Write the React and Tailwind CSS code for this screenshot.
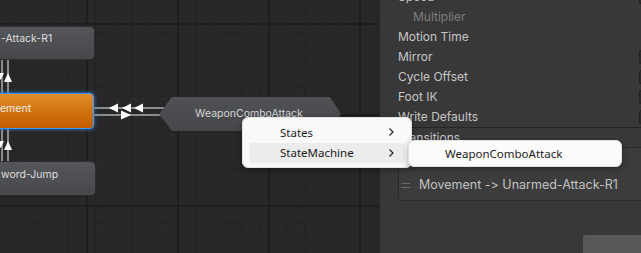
import React from "react";

const rows = [
  { label: "Speed", dim: false, box: true },
  { label: "Multiplier", dim: true, box: false },
  { label: "Motion Time", dim: false, box: false },
  { label: "Mirror", dim: false, box: true },
  { label: "Cycle Offset", dim: false, box: true },
  { label: "Foot IK", dim: false, box: true },
  { label: "Write Defaults", dim: false, box: true },
];

const Chevron = () => (
  <svg width="7" height="10" viewBox="0 0 7 10" className="shrink-0">
    <path d="M1.5 1.5 L5 5 L1.5 8.5" fill="none" stroke="#222" strokeWidth="1.2" />
  </svg>
);

const Graph = () => {
  return (
    <div className="relative w-[380px] h-full shrink-0 overflow-hidden bg-[#282828] bg-[linear-gradient(to_right,#1e1e1e_2px,transparent_2px),linear-gradient(to_bottom,#1e1e1e_2px,transparent_2px),linear-gradient(to_right,#232323_1px,transparent_1px),linear-gradient(to_bottom,#232323_1px,transparent_1px)] bg-[size:91px_91px,91px_91px,9.1px_9.1px,9.1px_9.1px] bg-[position:86px_23px,86px_23px,86px_23px,86px_23px]">
      {/* transitions */}
      <svg className="absolute left-0 top-0" width="380" height="253">
        <g stroke="#8c8c8c" strokeWidth="2">
          <line x1="2" y1="60" x2="2" y2="94" />
          <line x1="8" y1="60" x2="8" y2="94" />
          <line x1="2" y1="128" x2="2" y2="162" />
          <line x1="8" y1="128" x2="8" y2="162" />
          <line x1="94" y1="108" x2="166" y2="108" />
          <line x1="94" y1="115" x2="166" y2="115" />
        </g>
        <g fill="#ffffff">
          <polygon points="-3,73 4,73 0.5,80" />
          <polygon points="4,82 12,82 8,73" />
          <polygon points="-3,141 4,141 0.5,148" />
          <polygon points="4,150 12,150 8,141" />
          <polygon points="109,108 118,103.5 118,112.5" />
          <polygon points="122,108 131,103.5 131,112.5" />
          <polygon points="134,108 143,103.5 143,112.5" />
          <polygon points="131,115 121,110.5 121,119.5" />
        </g>
      </svg>

      {/* nodes */}
      <div className="absolute left-[-96px] top-[26px] w-[191px] h-[34px] rounded-[5px] border border-[#2e2e30] bg-[linear-gradient(#55565a,#47484c)] flex items-center pl-[96px] pb-[9px] text-[10.5px] text-[#dedede]">
        -Attack-R1
      </div>
      <div className="absolute left-[-96px] top-[93px] w-[190px] h-[36px] rounded-[4px] border-[1.5px] border-[#3d9bff] shadow-[0_0_4px_#2f7fd8] bg-[linear-gradient(#e08c26,#c25c00)] flex items-center pl-[95px] pb-[5px] text-[10.5px] text-[#f4efe6]">
        ement
      </div>
      <div className="absolute left-[-96px] top-[161px] w-[192px] h-[35px] rounded-[5px] border border-[#2e2e30] bg-[linear-gradient(#55565a,#47484c)] flex items-center pl-[96px] pb-[8px] text-[10.5px] text-[#dedede]">
        word-Jump
      </div>
      <div className="absolute left-[159px] top-[97px] w-[182px] h-[34px] bg-[linear-gradient(#505155,#46474b)] [clip-path:polygon(0_50%,13px_0,171px_0,100%_50%,171px_100%,13px_100%)] flex items-center justify-center text-[10.5px] text-[#d6d6d6]">
        <span className="-ml-[2px]">WeaponComboAttack</span>
      </div>
    </div>
  );
};

const Inspector = () => {
  return (
    <div className="relative flex-1 h-full bg-[#383838] text-[12px] text-[#c6c6c6] overflow-hidden">
      <div className="-mt-[13px]">
        {rows.map((r) => (
          <div key={r.label} className="h-[20px] flex items-center justify-between">
            <span className={r.dim ? "pl-[33px] text-[#7e7e7e]" : "pl-[18px]"}>{r.label}</span>
            {r.box && (
              <span className="w-[14px] h-[14px] -mr-[12px] rounded-[2px] bg-[#2a2a2a] border border-[#222]" />
            )}
          </div>
        ))}
      </div>
      <div className="h-px bg-[#252525]" />
      <div className="h-[19px] flex items-center pl-[18px] text-[#c6c6c6]">Transitions</div>
      <div className="ml-[18px] -mr-[4px] h-[54px] border border-[#2a2a2a] rounded-[3px] bg-[#3c3c3c] flex flex-col">
        <div className="flex-1" />
        <div className="h-[28px] flex items-center gap-[9px] pl-[2px] pb-[2px] text-[#c2c2c2] text-[12.5px]">
          <span className="flex flex-col gap-[3px] w-[9px]">
            <span className="h-px bg-[#6a6a6a]" />
            <span className="h-px bg-[#6a6a6a]" />
          </span>
          <span className="[font-feature-settings:'calt'_0,'liga'_0]">Movement -&gt; Unarmed-Attack-R1</span>
        </div>
      </div>
      <div className="absolute right-0 bottom-0 w-[58px] h-[18px] rounded-tl-[3px] bg-[#585858]" />
    </div>
  );
};

const Menus = () => {
  return (
    <>
      <div className="absolute left-[242px] top-[117px] w-[170px] h-[51px] rounded-[6px] bg-[#f9f9f9] shadow-[0_2px_6px_rgba(0,0,0,0.35)] border border-[#e2e2e2] px-[6px] py-[4px] flex flex-col text-[11.5px] text-[#1b1b1b] [font-family:'Noto_Sans',sans-serif]">
        <div className="h-[21px] flex items-center justify-between pl-[31px] pr-[10px]">
          <span>States</span>
          <Chevron />
        </div>
        <div className="h-[21px] flex items-center justify-between pl-[31px] pr-[10px] rounded-[4px] bg-[#ececec]">
          <span>StateMachine</span>
          <Chevron />
        </div>
      </div>
      <div className="absolute left-[408px] top-[140px] w-[214px] h-[27px] rounded-[6px] bg-[#fbfbfb] shadow-[0_2px_6px_rgba(0,0,0,0.35)] border border-[#e2e2e2] flex items-center pl-[36px] text-[11.5px] text-[#1b1b1b] [font-family:'Noto_Sans',sans-serif]">
        WeaponComboAttack
      </div>
    </>
  );
};

export default function App() {
  return (
    <div className="relative w-[641px] h-[253px] flex overflow-hidden [font-family:Inter,'Liberation_Sans',sans-serif]">
      <Graph />
      <Inspector />
      <Menus />
    </div>
  );
}
